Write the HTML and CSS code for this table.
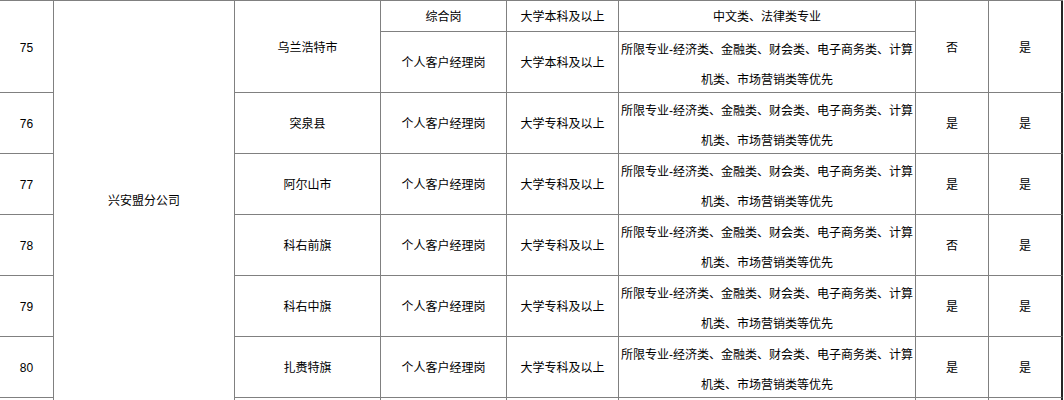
FILE: index.html
```html
<!DOCTYPE html>
<html lang="zh-CN">
<head>
<meta charset="utf-8">
<title>岗位表</title>
<link rel="stylesheet" href="styles.css">
</head>
<body>
<div class="sheet">
  <div class="cell num span2">75</div>
  <div class="cell branch">兴安盟分公司</div>
  <div class="cell span2">乌兰浩特市</div>
  <div class="cell">综合岗</div>
  <div class="cell">大学本科及以上</div>
  <div class="cell">中文类、法律类专业</div>
  <div class="cell span2">否</div>
  <div class="cell last span2">是</div>

  <div class="cell">个人客户经理岗</div>
  <div class="cell">大学本科及以上</div>
  <div class="cell major">所限专业-经济类、金融类、财会类、电子商务类、计算机类、市场营销类等优先</div>

  <div class="cell num">76</div>
  <div class="cell">突泉县</div>
  <div class="cell">个人客户经理岗</div>
  <div class="cell">大学专科及以上</div>
  <div class="cell major">所限专业-经济类、金融类、财会类、电子商务类、计算机类、市场营销类等优先</div>
  <div class="cell">是</div>
  <div class="cell last">是</div>

  <div class="cell num">77</div>
  <div class="cell">阿尔山市</div>
  <div class="cell">个人客户经理岗</div>
  <div class="cell">大学专科及以上</div>
  <div class="cell major">所限专业-经济类、金融类、财会类、电子商务类、计算机类、市场营销类等优先</div>
  <div class="cell">是</div>
  <div class="cell last">是</div>

  <div class="cell num">78</div>
  <div class="cell">科右前旗</div>
  <div class="cell">个人客户经理岗</div>
  <div class="cell">大学专科及以上</div>
  <div class="cell major">所限专业-经济类、金融类、财会类、电子商务类、计算机类、市场营销类等优先</div>
  <div class="cell">否</div>
  <div class="cell last">是</div>

  <div class="cell num">79</div>
  <div class="cell">科右中旗</div>
  <div class="cell">个人客户经理岗</div>
  <div class="cell">大学专科及以上</div>
  <div class="cell major">所限专业-经济类、金融类、财会类、电子商务类、计算机类、市场营销类等优先</div>
  <div class="cell">是</div>
  <div class="cell last">是</div>

  <div class="cell num">80</div>
  <div class="cell">扎赉特旗</div>
  <div class="cell">个人客户经理岗</div>
  <div class="cell">大学专科及以上</div>
  <div class="cell major">所限专业-经济类、金融类、财会类、电子商务类、计算机类、市场营销类等优先</div>
  <div class="cell">是</div>
  <div class="cell last">是</div>

  <div class="cell num"></div>
  <div class="cell cont"></div>
  <div class="cell"></div>
  <div class="cell"></div>
  <div class="cell"></div>
  <div class="cell"></div>
  <div class="cell"></div>
  <div class="cell last"></div>
</div>
</body>
</html>
```

FILE: styles.css
```css
html, body {
  margin: 0;
  padding: 0;
  background: #ffffff;
}

body {
  font-family: "Liberation Sans", "Noto Sans CJK SC", sans-serif;
  font-size: 12px;
  color: #000000;
  overflow: hidden;
}

.sheet {
  display: grid;
  grid-template-columns: 54px 181px 146px 126px 112px 297px 73px 74px;
  grid-template-rows: 31px repeat(7, 61px);
  border-top: 1px solid #808080;
  width: 1063px;
}

.cell {
  display: flex;
  align-items: center;
  justify-content: center;
  text-align: center;
  padding-top: 2px;
  border-right: 1px solid #808080;
  border-bottom: 1px solid #808080;
  box-sizing: border-box;
  line-height: 30px;
  overflow: hidden;
}

.span2 {
  grid-row: span 2;
}

.branch {
  grid-row: span 7;
  border-bottom: none;
}

.cont {
  border-bottom: none;
}

.major {
  padding-top: 6px;
}

.last {
  border-right: 2px solid #262626;
}
```
